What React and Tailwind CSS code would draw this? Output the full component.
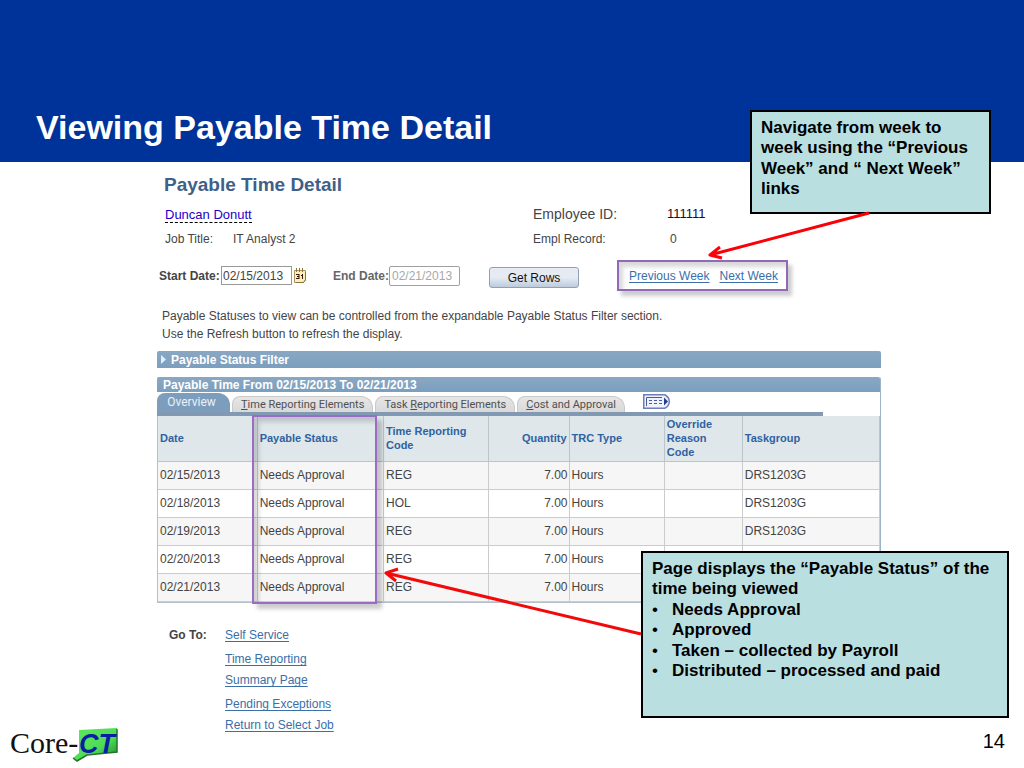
const rows = [
  ["02/15/2013", "REG", "DRS1203G"],
  ["02/18/2013", "HOL", "DRS1203G"],
  ["02/19/2013", "REG", "DRS1203G"],
  ["02/20/2013", "REG", ""],
  ["02/21/2013", "REG", ""],
];

const linkClass = "text-[#3a6fa8] underline underline-offset-2";
const headClass = "border-r border-b border-[#bcc4ca] px-[2px] pt-0 pb-[2px] text-left font-bold";
const cellClass = "border-r border-b border-[#cccccc] px-[2px] pt-0 pb-[2px]";

function Tab({ hot, before = "", after }) {
  return (
    <button
      type="button"
      className="h-4 rounded-tl-lg rounded-tr-xl border border-b-0 border-[#c9c9c9] bg-linear-to-b from-[#e6e6e6] to-[#d9d9d9] px-2 font-['Liberation_Sans_Narrow',Roboto,sans-serif] text-[11px] leading-[14px] whitespace-nowrap text-[#505050]"
    >
      {before}
      <span className="underline">{hot}</span>
      {after}
    </button>
  );
}

function CalendarIcon() {
  return (
    <svg width="12" height="15" viewBox="0 0 12 15" aria-hidden="true">
      <path d="M.5 2.500h11v9l-2 3h-9z" fill="#fbefb4" stroke="#a8955a" />
      <path d="M11.500 4v8l-2 2.500H2" fill="none" stroke="#8a7440" />
      <path d="M2.500 0v4M5.500 0v4M8.500 0v4" stroke="#8a7440" />
      <path d="M2 6.500h3M3 8.500h2M2 10.500h3M5 6v5M7 7.500h1.500M8.500 6v5" stroke="#3a1515" fill="none" />
    </svg>
  );
}

function ShowAllIcon() {
  return (
    <svg width="27" height="15" viewBox="0 0 27 15" aria-hidden="true">
      <path d="M.75.750h21c3 1.500 4.500 4 4.500 6.750s-1.500 5.250-4.500 6.750h-21z" fill="#eef2fc" stroke="#6f7eb8" strokeWidth="1.500" />
      <path d="M3.500 12V3.500H19" fill="none" stroke="#4a5a9c" />
      <path d="M6 6.500h13M6 9.500h13" stroke="#4a5a9c" strokeDasharray="3 2" />
      <path d="M21 3.500l4 4-4 4z" fill="#2b3b86" />
    </svg>
  );
}

function Logo() {
  return (
    <svg width="112" height="40" viewBox="0 0 112 40" role="img" aria-label="Core-CT">
      <defs>
        <linearGradient id="state" x1="0" y1="0" x2="1" y2="1">
          <stop offset="0" stopColor="#5fe85f" />
          <stop offset="0.600" stopColor="#4fdc55" />
          <stop offset="1" stopColor="#1d7f2a" />
        </linearGradient>
      </defs>
      <path d="M69 4l38-2v24l-20 2-10 1-10 6-4-3 6-5z" fill="url(#state)" />
      <path d="M107 3v23l-20 2-10 1-10 6-4-3" fill="none" stroke="#23752b" strokeWidth="1.500" />
      <text x="0" y="27" fontFamily="Liberation Serif, serif" fontSize="30" fill="#111111">Core-</text>
      <text x="69" y="27" fontFamily="Liberation Sans, sans-serif" fontStyle="italic" fontWeight="700" fontSize="27" fill="#0a1fa0">CT</text>
    </svg>
  );
}

export default function App() {
  return (
    <div className="relative min-h-screen bg-white font-['Liberation_Sans',Arial,sans-serif] text-xs text-[#444444]">
      <header className="flex h-[162px] items-end bg-[#003399] px-9 pb-[13px]">
        <h1 className="text-[34px] leading-[44px] font-bold text-white">Viewing Payable Time Detail</h1>
      </header>

      <main className="pr-[143px] pl-[157px]">
        <h2 className="pt-[9px] pl-[7px] text-[19px] leading-7 font-bold text-[#3f6088]">Payable Time Detail</h2>

        <div className="grid grid-cols-[68px_300px_134px_1fr] pl-2">
          <div className="col-span-2 flex h-8 items-center">
            <a href="#employee" className="border-b border-dashed border-black text-[13px] leading-[15px] text-[#2200cc]">
              Duncan Donutt
            </a>
          </div>
          <div className="flex h-[30px] items-center text-sm">Employee ID:</div>
          <div className="flex h-[30px] items-center text-[13px] text-[#1c0a2a]">111111</div>
          <div className="leading-4">Job Title:</div>
          <div className="leading-4">IT Analyst 2</div>
          <div className="leading-4">Empl Record:</div>
          <div className="pl-[3px] leading-4">0</div>
        </div>

        <form className="mt-[13px] flex h-[31px] items-center pl-[2px]" onSubmit={(e) => e.preventDefault()}>
          <label htmlFor="start" className="w-[62px] font-bold whitespace-nowrap">Start Date:</label>
          <input id="start" defaultValue="02/15/2013" className="h-[19px] w-[71px] border border-[#999999] px-px text-xs" />
          <button type="button" aria-label="Choose start date" className="ml-[2px]">
            <CalendarIcon />
          </button>
          <label htmlFor="end" className="ml-[27px] w-14 font-bold whitespace-nowrap text-[#666666]">End Date:</label>
          <input id="end" disabled defaultValue="02/21/2013" className="h-5 w-[71px] rounded-xs border border-[#a0a0a0] px-[2px] text-xs text-[#a8a8a8]" />
          <button type="submit" className="mt-1 ml-[29px] h-[21px] w-[90px] rounded-[3px] border border-[#93a0b4] bg-linear-to-b from-[#e6ebf3] from-50% to-[#bccbdd] text-xs text-[#111111]">
            Get Rows
          </button>
          <nav className="ml-[38px] flex h-[31px] items-center gap-[10px] border-2 border-[#9169b8] pr-[8px] pl-[10px] whitespace-nowrap shadow-[4px_5px_4px_rgba(0,0,0,0.200),inset_4px_5px_4px_rgba(0,0,0,0.150)]">
            <a href="#previous" className={linkClass}>Previous Week</a>
            <a href="#next" className={linkClass}>Next Week</a>
          </nav>
        </form>

        <p className="mt-4 pl-[5px] leading-[18px]">
          Payable Statuses to view can be controlled from the expandable Payable Status Filter section.
          <br />
          Use the Refresh button to refresh the display.
        </p>

        <button type="button" className="mt-2 flex h-[17px] w-full items-center gap-[5px] rounded-t-xs bg-linear-to-b from-[#8aa7c2] to-[#7b9fbf] pl-1 text-xs font-bold text-white">
          <svg width="5" height="9" viewBox="0 0 5 9" aria-hidden="true">
            <path d="M0 0l5 4.500-5 4.500z" fill="#d9f1fb" />
          </svg>
          Payable Status Filter
        </button>

        <section className="relative mt-[9px] rounded-t-xs border-r border-[#9db4c6]">
          <h3 className="h-[15px] rounded-t-xs bg-linear-to-b from-[#8aa7c2] to-[#7b9fbf] pl-[6px] text-xs leading-4 font-bold text-white">
            Payable Time From 02/15/2013 To 02/21/2013
          </h3>
          <div className="mr-[57px] flex h-6 items-end gap-[2px] border-b-4 border-[#8199b3] pt-px">
            <button type="button" className="h-[19px] w-[73px] rounded-tl-lg rounded-tr-xl bg-[#7d9dbc] pr-1 font-[Roboto,sans-serif] text-xs leading-[17px] text-[#e8f2fa]">
              Overview
            </button>
            <Tab hot="T" after="ime Reporting Elements" />
            <Tab before="Task " hot="R" after="eporting Elements" />
            <Tab hot="C" after="ost and Approval" />
            <button type="button" aria-label="Show all columns" className="ml-4 self-start pt-px">
              <ShowAllIcon />
            </button>
          </div>
          <table className="w-full table-fixed border-separate border-spacing-0 border-b border-l border-[#b4c0ca]">
            <colgroup>
              <col className="w-[13.800%]" />
              <col className="w-[17.500%]" />
              <col className="w-[14.600%]" />
              <col className="w-[11.100%]" />
              <col className="w-[13.200%]" />
              <col className="w-[10.800%]" />
              <col />
            </colgroup>
            <thead>
              <tr className="h-[46px] bg-[#dfe7eb] text-[11px] leading-[14px] text-[#2f62a0]">
                <th className={headClass}>Date</th>
                <th className={headClass}>Payable Status</th>
                <th className={headClass}>Time Reporting Code</th>
                <th className="border-r border-b border-[#bcc4ca] px-[2px] pb-[2px] text-right font-bold">Quantity</th>
                <th className={headClass}>TRC Type</th>
                <th className={headClass}>Override<br />Reason<br />Code</th>
                <th className={headClass}>Taskgroup</th>
              </tr>
            </thead>
            <tbody>
              {rows.map(([date, code, group]) => (
                <tr key={date} className="h-7 odd:bg-[#f6f6f6]">
                  <td className={cellClass}>{date}</td>
                  <td className={cellClass}>Needs Approval</td>
                  <td className={cellClass}>{code}</td>
                  <td className="border-r border-b border-[#cccccc] px-px pb-[2px] text-right">7.00</td>
                  <td className={cellClass}>Hours</td>
                  <td className={cellClass}></td>
                  <td className={cellClass}>{group}</td>
                </tr>
              ))}
            </tbody>
          </table>
          <div className="pointer-events-none absolute top-[38px] -bottom-px left-[95px] w-[125px] border-2 border-[#9a6cc4] shadow-[5px_5px_4px_rgba(0,0,0,0.200),inset_5px_5px_4px_rgba(0,0,0,0.150)]" />
        </section>

        <div className="mt-[22px] flex pl-3 leading-[21px]">
          <h3 className="w-14 font-bold">Go To:</h3>
          <ul className="flex flex-col gap-[3px]">
            <li><a href="#self" className={linkClass}>Self Service</a></li>
            <li>
              <a href="#time" className={linkClass}>Time Reporting</a>
              <br />
              <a href="#summary" className={linkClass}>Summary Page</a>
            </li>
            <li>
              <a href="#pending" className={linkClass}>Pending Exceptions</a>
              <br />
              <a href="#return" className={linkClass}>Return to Select Job</a>
            </li>
          </ul>
        </div>
      </main>

      <footer className="absolute inset-x-0 bottom-0 flex h-[42px] items-start justify-between pr-[19px] pl-[10px]">
        <Logo />
        <span className="text-xl leading-[30px] text-black">14</span>
      </footer>

      <aside className="absolute top-[110px] right-[33px] h-[104px] w-[241px] border-2 border-black bg-[#b9dfe1] px-[9px] py-[6px] text-[17px] leading-[1.2] font-bold text-black">
        Navigate from week to week using the “Previous Week” and “ Next Week” links
      </aside>
      <aside className="absolute top-[551px] right-[15px] h-[167px] w-[368px] border-2 border-black bg-[#b9dfe1] px-[9px] py-[6px] text-[17px] leading-[1.2] font-bold text-black">
        <p>Page displays the “Payable Status” of the time being viewed</p>
        <ul>
          {["Needs Approval", "Approved", "Taken – collected by Payroll", "Distributed – processed and paid"].map((item) => (
            <li key={item} className="flex">
              <span className="w-5 font-normal">•</span>
              {item}
            </li>
          ))}
        </ul>
      </aside>

      <svg className="pointer-events-none absolute top-[210px] right-[151px]" width="166" height="52" viewBox="0 0 166 52" aria-hidden="true">
        <path d="M162 3L3 45M13 37L3 45l12 3" fill="none" stroke="#fb0007" strokeWidth="3" strokeLinejoin="round" />
      </svg>
      <svg className="pointer-events-none absolute top-[565px] right-[382px]" width="260" height="72" viewBox="0 0 260 72" aria-hidden="true">
        <path d="M259 69L4 8M16 4L4 8l10 8" fill="none" stroke="#f20a0a" strokeWidth="3" strokeLinejoin="round" />
      </svg>
    </div>
  );
}
